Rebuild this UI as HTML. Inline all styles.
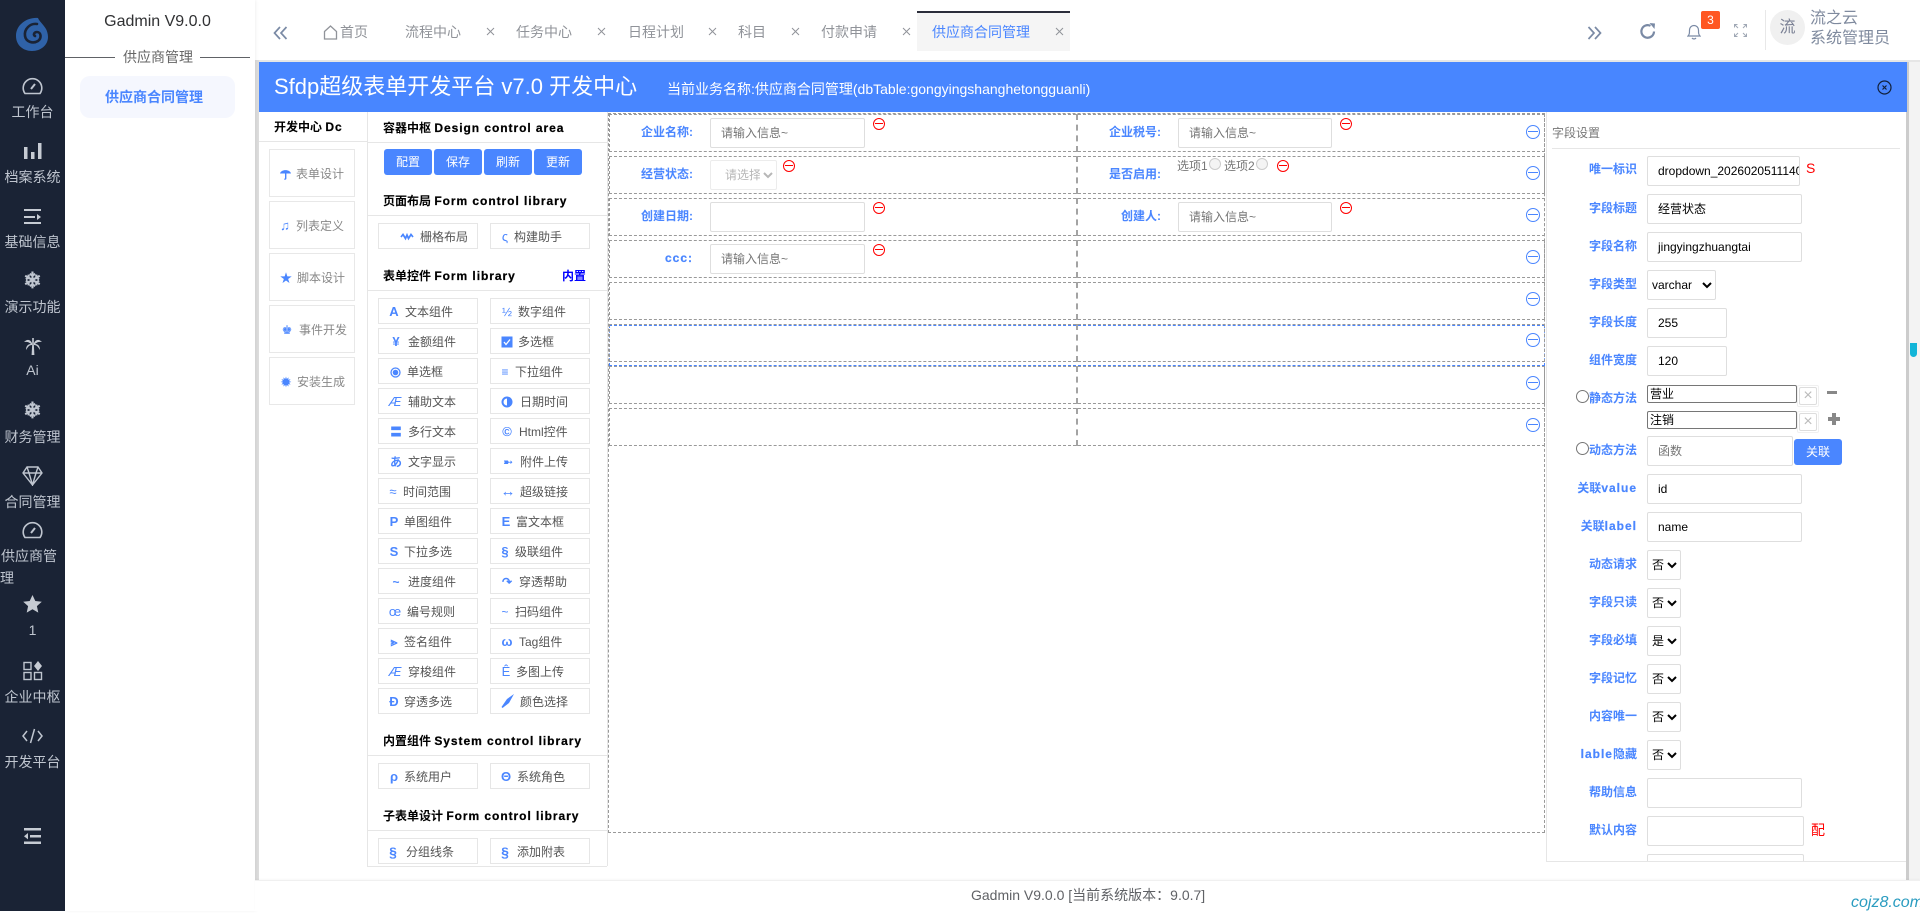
<!DOCTYPE html>
<html lang="zh"><head><meta charset="utf-8"><title>Sfdp</title>
<style>
*{box-sizing:border-box}
html,body{margin:0;padding:0;width:1920px;height:911px;overflow:hidden;background:#fff;font:12px "Liberation Sans","Noto Sans CJK SC",sans-serif;color:#333}
div,span,svg,select{position:absolute}
.t{white-space:nowrap;line-height:20px;height:20px}
.side{left:0;width:65px;text-align:center;color:#bfc5cf;font-size:14px;white-space:nowrap}
.tab{font-size:14px;color:#909399;top:22px}
.x{width:10px;height:10px;top:27px}
.x2{stroke:#909399;stroke-width:1;fill:none}
.c1{left:269px;width:86px;height:48px;border:1px solid #e8e8e8}
.c1t{color:#888;font-size:12px;margin-top:1px}
.ico{color:#4a86ff;transform:translateX(-50%);white-space:nowrap;line-height:20px;height:20px;font-size:12px;margin-top:1px}
.h{font-weight:700;color:#000;font-size:12px;white-space:nowrap;line-height:20px;height:20px;left:383px}
.h b{letter-spacing:.95px;font-weight:700;-webkit-text-stroke:.25px #000}
.ln{left:367px;width:240px;height:1px;background:#e6e6e6}
.b{width:100px;height:26px;border:1px solid #e6e6e6;background:#fff}
.bt{color:#555;white-space:nowrap;line-height:20px;height:20px;font-size:12px;margin-top:1px}
.sb{top:149px;width:48px;height:26px;background:#4a86ff;border-radius:3px;color:#fff;text-align:center;line-height:26px;font-size:12px}
.row{left:609px;width:936px;height:38px;border:1px dashed #999}
.v{left:1076px;width:2px;height:38px;border-left:2px dashed #a3a3a3}
.lb{color:#4a86ff;font-weight:700;white-space:nowrap;text-align:right;line-height:20px;height:20px;font-size:12px}
.lb em{font-style:normal;letter-spacing:1px;-webkit-text-stroke:.2px #4a86ff}
.in{height:30px;border:1px solid #dedede;border-radius:2px;background:#fff;line-height:28px;padding-left:10px;font-size:12px;color:#000;overflow:hidden;white-space:nowrap}
.ph{color:#757575}
.mr,.mb{border-radius:50%;border:1px solid red;width:12px;height:12px}
.mr:after,.mb:after{content:"";position:absolute;left:1px;right:1px;top:4px;height:1px;background:red}
.mb{border-color:#4a86ff;width:14px;height:14px}
.mb:after{background:#4a86ff;top:5px}
select{height:30px;border:1px solid #dedede;border-radius:2px;background:#fff;font:12px "Liberation Sans","Noto Sans CJK SC",sans-serif;color:#000;padding:0}
.pl{left:1500px;width:137px}
.rad{width:13px;height:13px;border-radius:50%;border:1px solid #767676;background:#fff}
.rad2{width:12px;height:12px;border-radius:50%;border:1px solid #ccc;background:#f4f4f4}
.sm{height:18px;left:1647px;width:150px;border:1px solid #767676;border-radius:2px;background:#fff;color:#000;font-size:12px;line-height:16px;padding-left:2px}
.xo{left:1797px;width:22px;height:22px;border:1px solid #f0f0f0;border-radius:2px}
.xi{left:1px;top:1px;width:18px;height:18px;border:1px solid #ddd;border-radius:2px;color:#bbb;text-align:center;line-height:16px;font-size:16px}
</style></head><body>

<!-- main backdrop -->
<div style="left:255px;top:60px;width:1665px;height:2px;background:#e6e6e6"></div>
<div style="left:255px;top:60px;width:4px;height:820px;background:#dcdcdc"></div>
<div style="left:1906px;top:62px;width:3px;height:818px;background:#ccc"></div>
<div style="left:1909px;top:62px;width:11px;height:818px;background:#f3f3f3"></div>
<div style="left:1910px;top:343px;width:7px;height:14px;background:#13b5d8;border-radius:0 0 4px 4px"></div>
<div style="left:259px;top:112px;width:1647px;height:768px;background:#fff;border-radius:0 0 0 6px"></div>

<!-- dark sidebar -->
<div style="left:0;top:0;width:65px;height:911px;background:#1a2335"></div>
<svg style="left:16px;top:17px" width="33" height="34" viewBox="0 0 33 34"><path d="M22 1C12 0 0 7 0 19c0 9 7 15 16 15 9 0 16-6 16-14 0-3-1-6-2-8-3-5-7-8-8-11z" fill="#2f62a8"/><path d="M21 7C14 6 8 12 9 19c1 6 8 8 13 5 4-3 3-9-1-9-3 0-4 3-2 4" fill="none" stroke="#1a2335" stroke-width="2.6" stroke-linecap="round"/></svg>

<svg style="left:22px;top:77px" width="21" height="18" viewBox="0 0 21 18" fill="none" stroke="#bfc5cf" stroke-width="1.6"><path d="M3 16.5a9.3 9.3 0 1 1 15 0z"/><path d="M9 12l4-5" stroke-width="2"/></svg>
<div class="side" style="top:102px">工作台</div>
<svg style="left:22px;top:142px" width="20" height="18" viewBox="0 0 20 18" fill="#c6cbd3"><rect x="2" y="5" width="3.5" height="12"/><rect x="9" y="10" width="3.5" height="7"/><rect x="16" y="1" width="3.5" height="16"/></svg>
<div class="side" style="top:167px">档案系统</div>
<svg style="left:23px;top:208px" width="19" height="18" viewBox="0 0 19 18" fill="#c6cbd3"><rect x="1" y="1" width="17" height="2"/><rect x="1" y="8" width="11" height="2"/><rect x="1" y="14" width="17" height="2"/><path d="M14 6l4 3-4 3z"/></svg>
<div class="side" style="top:232px">基础信息</div>
<div class="side" style="top:268px;font-size:22px;line-height:26px;font-weight:700">❄</div>
<div class="side" style="top:297px">演示功能</div>
<svg style="left:24px;top:338px" width="18" height="17" viewBox="0 0 18 17" fill="#c6cbd3"><path d="M8 5C6 1 3 1 0 4c3-.5 5 0 7 2-3 0-5 2-5 6 2-3 3-5 6-5 0-1 0-1 0-2zM10 5c2-4 5-4 8-1-3-.5-5 0-7 2 3 0 5 2 5 6-2-3-3-5-6-5 0-1 0-1 0-2z"/><path d="M8 0h2v6H8z" opacity=".8"/><path d="M8.200 6h1.600l.6 11H7.600z"/></svg>
<div class="side" style="top:362px">Ai</div>
<div class="side" style="top:398px;font-size:22px;line-height:26px;font-weight:700">❄</div>
<div class="side" style="top:427px">财务管理</div>
<svg style="left:22px;top:466px" width="21" height="20" viewBox="0 0 21 20" fill="none" stroke="#bfc5cf" stroke-width="1.4"><path d="M5 1h11l4 6-9.500 12L1 7zM1 7h19M7 7l3.500 12L14 7M5 1l2 6M16 1l-2 6"/></svg>
<div class="side" style="top:492px">合同管理</div>
<svg style="left:22px;top:521px" width="21" height="18" viewBox="0 0 21 18" fill="none" stroke="#bfc5cf" stroke-width="1.6"><path d="M3 16.5a9.3 9.3 0 1 1 15 0z"/><path d="M9 12l4-5" stroke-width="2"/></svg>
<div class="side" style="top:546px;text-align:left;left:1px">供应商管</div>
<div class="side" style="top:568px;text-align:left;left:0">理</div>
<svg style="left:23px;top:595px" width="19" height="18" viewBox="0 0 19 18"><path d="M9.500 0l2.800 6 6.500.7-4.900 4.400 1.400 6.500-5.800-3.300-5.800 3.300 1.400-6.500L.2 6.700 6.700 6z" fill="#c6cbd3"/></svg>
<div class="side" style="top:622px">1</div>
<svg style="left:23px;top:661px" width="20" height="20" viewBox="0 0 20 20" fill="none" stroke="#bfc5cf" stroke-width="1.4"><rect x="1" y="1.500" width="7" height="7"/><rect x="1" y="11.500" width="7" height="7"/><rect x="11.500" y="11.500" width="7" height="7"/><path d="M15 0l4 5-4 5-4-5z" fill="#c6cbd3" stroke="none"/></svg>
<div class="side" style="top:687px">企业中枢</div>
<svg style="left:22px;top:728px" width="21" height="16" viewBox="0 0 21 16" fill="none" stroke="#bfc5cf" stroke-width="1.500"><path d="M5 3L1 8l4 5M16 3l4 5-4 5M12.500 1l-4 14"/></svg>
<div class="side" style="top:752px">开发平台</div>
<svg style="left:23px;top:827px" width="19" height="18" viewBox="0 0 19 18" fill="#c6cbd3"><rect x="1" y="1" width="17" height="2.500"/><rect x="7" y="8" width="11" height="2.500"/><rect x="1" y="14.500" width="17" height="2.500"/><path d="M5 6L1 9.200l4 3.200z"/></svg>

<!-- second sidebar -->
<div style="left:65px;top:0;width:190px;height:911px;background:#fff;box-shadow:1px 0 3px rgba(0,0,0,.06)"></div>
<div class="t" style="left:65px;width:185px;text-align:center;top:12px;font-size:16px;color:#303133">Gadmin V9.0.0</div>
<div style="left:65px;top:57px;width:50px;height:1px;background:#606266"></div>
<div style="left:200px;top:57px;width:50px;height:1px;background:#606266"></div>
<div class="t" style="left:123px;top:47px;font-size:14px;color:#666">供应商管理</div>
<div style="left:80px;top:76px;width:155px;height:42px;background:#f5f7fe;border-radius:10px"></div>
<div class="t" style="left:105px;top:87px;font-size:14px;color:#4a86ff;font-weight:700">供应商合同管理</div>

<!-- top tabs -->
<svg style="left:273px;top:26px" width="15" height="14" viewBox="0 0 15 14" fill="none" stroke="#7a8aa5" stroke-width="1.700"><path d="M7 1L1.500 7 7 13M13.500 1L8 7l5.500 6"/></svg>
<svg style="left:323px;top:25px" width="15" height="15" viewBox="0 0 15 15" fill="none" stroke="#909399" stroke-width="1.300"><path d="M1.500 6.500L7.500 1l6 5.500V14h-12z"/></svg>
<div class="t tab" style="left:340px">首页</div>
<div class="t tab" style="left:405px">流程中心</div>
<svg class="x" style="left:486px"><path class="x2" d="M1 1l7 7M8 1l-7 7"/></svg>
<div class="t tab" style="left:516px">任务中心</div>
<svg class="x" style="left:597px"><path class="x2" d="M1 1l7 7M8 1l-7 7"/></svg>
<div class="t tab" style="left:628px">日程计划</div>
<svg class="x" style="left:708px"><path class="x2" d="M1 1l7 7M8 1l-7 7"/></svg>
<div class="t tab" style="left:738px">科目</div>
<svg class="x" style="left:791px"><path class="x2" d="M1 1l7 7M8 1l-7 7"/></svg>
<div class="t tab" style="left:821px">付款申请</div>
<svg class="x" style="left:902px"><path class="x2" d="M1 1l7 7M8 1l-7 7"/></svg>
<div style="left:917px;top:11px;width:153px;height:40px;background:#f5f5f5;border-top:2px solid #2b2d3a"></div>
<div class="t tab" style="left:932px;color:#4a86ff">供应商合同管理</div>
<svg class="x" style="left:1055px"><path class="x2" d="M1 1l7 7M8 1l-7 7"/></svg>

<svg style="left:1587px;top:26px" width="15" height="14" viewBox="0 0 15 14" fill="none" stroke="#7a8aa5" stroke-width="1.700"><path d="M1.500 1L7 7l-5.500 6M8 1l5.500 6L8 13"/></svg>
<svg style="left:1640px;top:23px" width="16" height="16" viewBox="0 0 16 16" fill="none" stroke="#7a8aa5" stroke-width="2.200"><path d="M14 8.500A6.300 6.300 0 1 1 10.500 2.800"/><path d="M9.500 0l5.500 .5-.5 5.500z" fill="#7a8aa5" stroke="none"/></svg>
<svg style="left:1687px;top:23px" width="14" height="17" viewBox="0 0 14 17" fill="none" stroke="#7a8aa5" stroke-width="1.200"><path d="M1 13c1.500-1.500 1.500-3 1.500-6a4.500 4.500 0 0 1 9 0c0 3 0 4.500 1.500 6zM5 15c1 1.300 3 1.300 4 0"/></svg>
<div style="left:1701px;top:11px;width:19px;height:18px;background:#ff5722;border-radius:2px;color:#fff;text-align:center;line-height:18px;font-size:12px">3</div>
<svg style="left:1734px;top:24px" width="13" height="13" viewBox="0 0 13 13" fill="none" stroke="#a0a8b5" stroke-width="1"><path d="M.5 3.500v-3h3M9.500.5h3v3M.5 9.500v3h3M9.500 12.500h3v-3M.5.500L4 4M12.500.500L9 4M.5 12.500L4 9M12.500 12.500L9 9"/></svg>
<div style="left:1765px;top:10px;width:1px;height:40px;background:#e8e8e8"></div>
<div style="left:1770px;top:10px;width:35px;height:35px;border-radius:50%;background:#f0f0f0;color:#7a8094;text-align:center;line-height:35px;font-size:16px">流</div>
<div class="t" style="left:1810px;top:9px;font-size:16px;color:#7f8a9e">流之云</div>
<div class="t" style="left:1810px;top:29px;font-size:16px;color:#7f8a9e">系统管理员</div>

<!-- blue header -->
<div style="left:259px;top:62px;width:1648px;height:50px;background:#4886ff"></div>
<div class="t" style="left:274px;top:77px;font-size:22px;color:#fff">Sfdp超级表单开发平台 v7.0 开发中心</div>
<div class="t" style="left:667px;top:79px;font-size:14px;color:#fff">当前业务名称:供应商合同管理(dbTable:gongyingshanghetongguanli)</div>
<svg style="left:1877px;top:80px" width="15" height="15" viewBox="0 0 15 15" fill="none" stroke="#12203a" stroke-width="1.200"><circle cx="7.500" cy="7.500" r="6.500"/><path d="M5.500 5.500l4 4M9.500 5.500l-4 4"/></svg>

<!-- column 1 -->
<div style="left:259px;top:141px;width:108px;height:1px;background:#e6e6e6"></div>
<div class="h" style="left:274px;top:117px">开发中心 <b>Dc</b></div>
<div class="c1" style="top:149px"></div><svg style="left:280px;top:168px" width="11" height="12" viewBox="0 0 11 12" fill="#4a86ff"><path d="M0 5.500C1 1 10 1 11 5.500z"/><path d="M5 4h1.400v6.500c0 1-1 1.500-2.400 1l.4-1c.6.200 .6 0 .6-.4z"/></svg><div class="t c1t" style="left:296px;top:163px">表单设计</div>
<div class="c1" style="top:201px"></div><div class="ico" style="left:285px;top:215px;font-size:13px">♫</div><div class="t c1t" style="left:296px;top:215px">列表定义</div>
<div class="c1" style="top:253px"></div><div class="ico" style="left:286px;top:267px">★</div><div class="t c1t" style="left:297px;top:267px">脚本设计</div>
<div class="c1" style="top:305px"></div><div class="ico" style="left:287px;top:319px">♚</div><div class="t c1t" style="left:299px;top:319px">事件开发</div>
<div class="c1" style="top:357px"></div><div class="ico" style="left:286px;top:371px;font-size:14px">✹</div><div class="t c1t" style="left:297px;top:371px">安装生成</div>

<!-- column 2 -->
<div style="left:367px;top:112px;width:1px;height:754px;background:#e6e6e6"></div>
<div style="left:607px;top:112px;width:1px;height:754px;background:#e6e6e6"></div>
<div class="ln" style="top:866px"></div>
<div class="h" style="top:118px">容器中枢 <b>Design control area</b></div><div class="ln" style="top:142px"></div>
<div class="sb" style="left:384px">配置</div><div class="sb" style="left:434px">保存</div><div class="sb" style="left:484px">刷新</div><div class="sb" style="left:534px">更新</div>
<div class="h" style="top:191px">页面布局 <b>Form control library</b></div><div class="ln" style="top:215px"></div>
<div class="b" style="left:378px;top:223px"></div><svg style="left:400px;top:233px" width="14" height="8" viewBox="0 0 14 8" fill="none" stroke="#4a86ff" stroke-width="1.700"><path d="M1 4l2-2.500 2.500 4L7 2l1.500 3.500L11 1.500 13 4"/></svg><div class="bt" style="left:420px;top:226px">栅格布局</div>
<div class="b" style="left:490px;top:223px"></div><div class="ico" style="left:505px;top:226px;font-size:13px">ς</div><div class="bt" style="left:514px;top:226px">构建助手</div>
<div class="h" style="top:266px">表单控件 <b>Form library</b></div><div class="t" style="left:562px;top:266px;color:#00f;font-weight:700">内置</div><div class="ln" style="top:290px"></div>

<div class="b" style="left:378px;top:298px"></div><div class="ico" style="left:394px;top:301px;font-weight:700;font-size:13px">A</div><div class="bt" style="left:405px;top:301px">文本组件</div>
<div class="b" style="left:490px;top:298px"></div><div class="ico" style="left:507px;top:301px">½</div><div class="bt" style="left:518px;top:301px">数字组件</div>
<div class="b" style="left:378px;top:328px"></div><div class="ico" style="left:396px;top:331px;font-weight:700;font-size:13px">¥</div><div class="bt" style="left:408px;top:331px">金额组件</div>
<div class="b" style="left:490px;top:328px"></div><svg style="left:501px;top:336px" width="12" height="12" viewBox="0 0 12 12"><rect x=".5" y=".5" width="11" height="11" fill="#4a86ff"/><path d="M3 6l2 2.500L9 3.500" fill="none" stroke="#fff" stroke-width="1.300"/></svg><div class="bt" style="left:518px;top:331px">多选框</div>
<div class="b" style="left:378px;top:358px"></div><svg style="left:390px;top:367px" width="11" height="11" viewBox="0 0 11 11"><circle cx="5.500" cy="5.500" r="4.500" fill="none" stroke="#4a86ff" stroke-width="1.300"/><circle cx="5.500" cy="5.500" r="2.800" fill="#4a86ff"/></svg><div class="bt" style="left:407px;top:361px">单选框</div>
<div class="b" style="left:490px;top:358px"></div><div class="ico" style="left:505px;top:361px;font-weight:700">≡</div><div class="bt" style="left:515px;top:361px">下拉组件</div>
<div class="b" style="left:378px;top:388px"></div><div class="ico" style="left:395px;top:391px;font-style:italic;font-size:13px">Æ</div><div class="bt" style="left:408px;top:391px">辅助文本</div>
<div class="b" style="left:490px;top:388px"></div><svg style="left:501px;top:396px" width="12" height="12" viewBox="0 0 12 12"><circle cx="6" cy="6" r="5.500" fill="#4a86ff"/><path d="M6 2.500a3.500 3.500 0 0 0 0 7z" fill="#fff"/></svg><div class="bt" style="left:520px;top:391px">日期时间</div>
<div class="b" style="left:378px;top:418px"></div><div class="ico" style="left:396px;top:421px;font-weight:700">〓</div><div class="bt" style="left:408px;top:421px">多行文本</div>
<div class="b" style="left:490px;top:418px"></div><div class="ico" style="left:507px;top:421px;font-weight:700;font-size:13px">©</div><div class="bt" style="left:519px;top:421px">Html控件</div>
<div class="b" style="left:378px;top:448px"></div><div class="ico" style="left:396px;top:451px;font-weight:700">あ</div><div class="bt" style="left:408px;top:451px">文字显示</div>
<div class="b" style="left:490px;top:448px"></div><div class="ico" style="left:508px;top:451px">➼</div><div class="bt" style="left:520px;top:451px">附件上传</div>
<div class="b" style="left:378px;top:478px"></div><div class="ico" style="left:393px;top:481px;font-size:13px">≈</div><div class="bt" style="left:403px;top:481px">时间范围</div>
<div class="b" style="left:490px;top:478px"></div><div class="ico" style="left:508px;top:481px;font-size:15px">↔</div><div class="bt" style="left:520px;top:481px">超级链接</div>
<div class="b" style="left:378px;top:508px"></div><div class="ico" style="left:394px;top:511px;font-weight:700;font-size:13px">P</div><div class="bt" style="left:404px;top:511px">单图组件</div>
<div class="b" style="left:490px;top:508px"></div><div class="ico" style="left:506px;top:511px;font-weight:700;font-size:13px">E</div><div class="bt" style="left:516px;top:511px">富文本框</div>
<div class="b" style="left:378px;top:538px"></div><div class="ico" style="left:394px;top:541px;font-weight:700;font-size:13px">S</div><div class="bt" style="left:404px;top:541px">下拉多选</div>
<div class="b" style="left:490px;top:538px"></div><div class="ico" style="left:505px;top:541px;font-weight:700;font-size:13px">§</div><div class="bt" style="left:515px;top:541px">级联组件</div>
<div class="b" style="left:378px;top:568px"></div><div class="ico" style="left:396px;top:571px;font-weight:700">~</div><div class="bt" style="left:408px;top:571px">进度组件</div>
<div class="b" style="left:490px;top:568px"></div><div class="ico" style="left:507px;top:571px;font-weight:700">↷</div><div class="bt" style="left:519px;top:571px">穿透帮助</div>
<div class="b" style="left:378px;top:598px"></div><div class="ico" style="left:395px;top:601px;font-size:13px">œ</div><div class="bt" style="left:407px;top:601px">编号规则</div>
<div class="b" style="left:490px;top:598px"></div><div class="ico" style="left:505px;top:601px">~</div><div class="bt" style="left:515px;top:601px">扫码组件</div>
<div class="b" style="left:378px;top:628px"></div><div class="ico" style="left:394px;top:631px;font-weight:700">⪢</div><div class="bt" style="left:404px;top:631px">签名组件</div>
<div class="b" style="left:490px;top:628px"></div><div class="ico" style="left:507px;top:631px;font-weight:700;font-size:13px">ω</div><div class="bt" style="left:519px;top:631px">Tag组件</div>
<div class="b" style="left:378px;top:658px"></div><div class="ico" style="left:395px;top:661px;font-style:italic;font-size:13px">Æ</div><div class="bt" style="left:408px;top:661px">穿梭组件</div>
<div class="b" style="left:490px;top:658px"></div><div class="ico" style="left:506px;top:661px;font-size:13px">Ê</div><div class="bt" style="left:516px;top:661px">多图上传</div>
<div class="b" style="left:378px;top:688px"></div><div class="ico" style="left:394px;top:691px;font-weight:700;font-size:13px">Ð</div><div class="bt" style="left:404px;top:691px">穿透多选</div>
<div class="b" style="left:490px;top:688px"></div><svg style="left:501px;top:694px" width="13" height="14" viewBox="0 0 13 14"><path d="M13 0L6 5 .5 13 1.500 14 8 9z" fill="#4a86ff"/></svg><div class="bt" style="left:520px;top:691px">颜色选择</div>

<div class="h" style="top:731px">内置组件 <b>System control library</b></div><div class="ln" style="top:755px"></div>
<div class="b" style="left:378px;top:763px"></div><div class="ico" style="left:394px;top:766px;font-weight:700;font-size:13px">ρ</div><div class="bt" style="left:404px;top:766px">系统用户</div>
<div class="b" style="left:490px;top:763px"></div><div class="ico" style="left:506px;top:766px;font-weight:700;font-size:13px">Θ</div><div class="bt" style="left:517px;top:766px">系统角色</div>
<div class="h" style="top:806px">子表单设计 <b>Form control library</b></div><div class="ln" style="top:830px"></div>
<div class="b" style="left:378px;top:838px"></div><div class="ico" style="left:393px;top:841px;font-weight:700;font-size:14px">§</div><div class="bt" style="left:406px;top:841px">分组线条</div>
<div class="b" style="left:490px;top:838px"></div><div class="ico" style="left:505px;top:841px;font-weight:700;font-size:14px">§</div><div class="bt" style="left:517px;top:841px">添加附表</div>

<!-- design area -->
<div style="left:608px;top:113px;width:937px;height:720px;border:1px dashed #999"></div>
<div style="left:609px;top:325px;width:936px;height:41px;border:1px dashed #4a86ff"></div>
<div class="row" style="top:114px"></div><div class="v" style="top:114px"></div>
<div class="row" style="top:156px"></div><div class="v" style="top:156px"></div>
<div class="row" style="top:198px"></div><div class="v" style="top:198px"></div>
<div class="row" style="top:240px"></div><div class="v" style="top:240px"></div>
<div class="row" style="top:282px"></div><div class="v" style="top:282px"></div>
<div class="row" style="top:324px"></div><div class="v" style="top:324px"></div>
<div class="row" style="top:366px"></div><div class="v" style="top:366px"></div>
<div class="row" style="top:408px"></div><div class="v" style="top:408px"></div>

<div class="lb" style="left:600px;width:93px;top:122px">企业名称:</div>
<div class="in ph" style="left:710px;top:118px;width:155px">请输入信息~</div><div class="mr" style="left:873px;top:118px"></div>
<div class="lb" style="left:1070px;width:91px;top:122px">企业税号:</div>
<div class="in ph" style="left:1178px;top:118px;width:154px">请输入信息~</div><div class="mr" style="left:1340px;top:118px"></div>

<div class="lb" style="left:600px;width:93px;top:164px">经营状态:</div>
<select disabled style="left:710px;top:160px;width:67px;padding-left:10px;border-color:#e4e4e4;color:#999"><option>请选择</option></select><div class="mr" style="left:783px;top:160px"></div>
<div class="lb" style="left:1070px;width:91px;top:164px">是否启用:</div>
<div class="t" style="left:1177px;top:156px;color:#777">选项1</div><div class="rad2" style="left:1209px;top:158px"></div>
<div class="t" style="left:1224px;top:156px;color:#777">选项2</div><div class="rad2" style="left:1256px;top:158px"></div><div class="mr" style="left:1277px;top:160px"></div>

<div class="lb" style="left:600px;width:93px;top:206px">创建日期:</div>
<div class="in" style="left:710px;top:202px;width:155px"></div><div class="mr" style="left:873px;top:202px"></div>
<div class="lb" style="left:1070px;width:91px;top:206px">创建人:</div>
<div class="in ph" style="left:1178px;top:202px;width:154px">请输入信息~</div><div class="mr" style="left:1340px;top:202px"></div>

<div class="lb" style="left:600px;width:93px;top:248px"><em>ccc:</em></div>
<div class="in ph" style="left:710px;top:244px;width:155px">请输入信息~</div><div class="mr" style="left:873px;top:244px"></div>

<div class="mb" style="left:1526px;top:125px"></div>
<div class="mb" style="left:1526px;top:166px"></div>
<div class="mb" style="left:1526px;top:208px"></div>
<div class="mb" style="left:1526px;top:250px"></div>
<div class="mb" style="left:1526px;top:292px"></div>
<div class="mb" style="left:1526px;top:333px"></div>
<div class="mb" style="left:1526px;top:376px"></div>
<div class="mb" style="left:1526px;top:418px"></div>

<!-- right panel -->
<div style="left:1546px;top:112px;width:360px;height:750px;background:#fff;border-left:1px solid #e6e6e6;border-bottom:1px solid #e6e6e6;overflow:hidden">
<div class="in" style="left:100px;top:742px;width:157px"></div>
</div>
<div class="t" style="left:1552px;top:123px;color:#777">字段设置</div>
<div style="left:1552px;top:148px;width:348px;height:1px;background:#e6e6e6"></div>

<div class="lb pl" style="top:159px">唯一标识</div>
<div class="in" style="left:1647px;top:156px;width:153px">dropdown_2026020511140</div>
<div class="t" style="left:1806px;top:158px;color:red;font-size:14px">S</div>
<div class="lb pl" style="top:198px">字段标题</div><div class="in" style="left:1647px;top:194px;width:155px">经营状态</div>
<div class="lb pl" style="top:236px">字段名称</div><div class="in" style="left:1647px;top:232px;width:155px">jingyingzhuangtai</div>
<div class="lb pl" style="top:274px">字段类型</div><select style="left:1647px;top:270px;width:69px"><option>varchar</option></select>
<div class="lb pl" style="top:312px">字段长度</div><div class="in" style="left:1647px;top:308px;width:80px">255</div>
<div class="lb pl" style="top:350px">组件宽度</div><div class="in" style="left:1647px;top:346px;width:80px">120</div>

<div class="rad" style="left:1576px;top:390px"></div><div class="lb pl" style="top:388px">静态方法</div>
<div class="sm" style="top:385px">营业</div><div class="xo" style="top:385px"><div class="xi">×</div></div>
<div style="left:1827px;top:391px;width:10px;height:3px;background:#888"></div>
<div class="sm" style="top:411px">注销</div><div class="xo" style="top:411px"><div class="xi">×</div></div>
<div style="left:1828px;top:417px;width:12px;height:4px;background:#888"></div><div style="left:1832px;top:413px;width:4px;height:12px;background:#888"></div>

<div class="rad" style="left:1576px;top:442px"></div><div class="lb pl" style="top:440px">动态方法</div>
<div class="in ph" style="left:1647px;top:436px;width:146px">函数</div>
<div style="left:1794px;top:439px;width:48px;height:26px;background:#4a86ff;border-radius:3px;color:#fff;text-align:center;line-height:26px">关联</div>

<div class="lb pl" style="top:478px">关联<em>value</em></div><div class="in" style="left:1647px;top:474px;width:155px">id</div>
<div class="lb pl" style="top:516px">关联<em>label</em></div><div class="in" style="left:1647px;top:512px;width:155px">name</div>
<div class="lb pl" style="top:554px">动态请求</div><select style="left:1647px;top:550px;width:34px"><option>否</option></select>
<div class="lb pl" style="top:592px">字段只读</div><select style="left:1647px;top:588px;width:34px"><option>否</option></select>
<div class="lb pl" style="top:630px">字段必填</div><select style="left:1647px;top:626px;width:34px"><option>是</option></select>
<div class="lb pl" style="top:668px">字段记忆</div><select style="left:1647px;top:664px;width:34px"><option>否</option></select>
<div class="lb pl" style="top:706px">内容唯一</div><select style="left:1647px;top:702px;width:34px"><option>否</option></select>
<div class="lb pl" style="top:744px"><em>lable</em>隐藏</div><select style="left:1647px;top:740px;width:34px"><option>否</option></select>
<div class="lb pl" style="top:782px">帮助信息</div><div class="in" style="left:1647px;top:778px;width:155px"></div>
<div class="lb pl" style="top:820px">默认内容</div><div class="in" style="left:1647px;top:816px;width:157px"></div>
<div class="t" style="left:1811px;top:820px;color:red;font-size:14px">配</div>

<!-- footer -->
<div style="left:255px;top:880px;width:1665px;height:31px;background:#fff;border-top:1px solid #f0f0f0;box-shadow:0 -1px 2px rgba(0,0,0,.03)"></div>
<div class="t" style="left:971px;top:885px;font-size:14px;color:#606266">Gadmin V9.0.0 [当前系统版本：9.0.7]</div>
<div class="t" style="left:1851px;top:893px;font-size:16px;font-style:italic;color:#2a9cc0">cojz8.com</div>
</body></html>
